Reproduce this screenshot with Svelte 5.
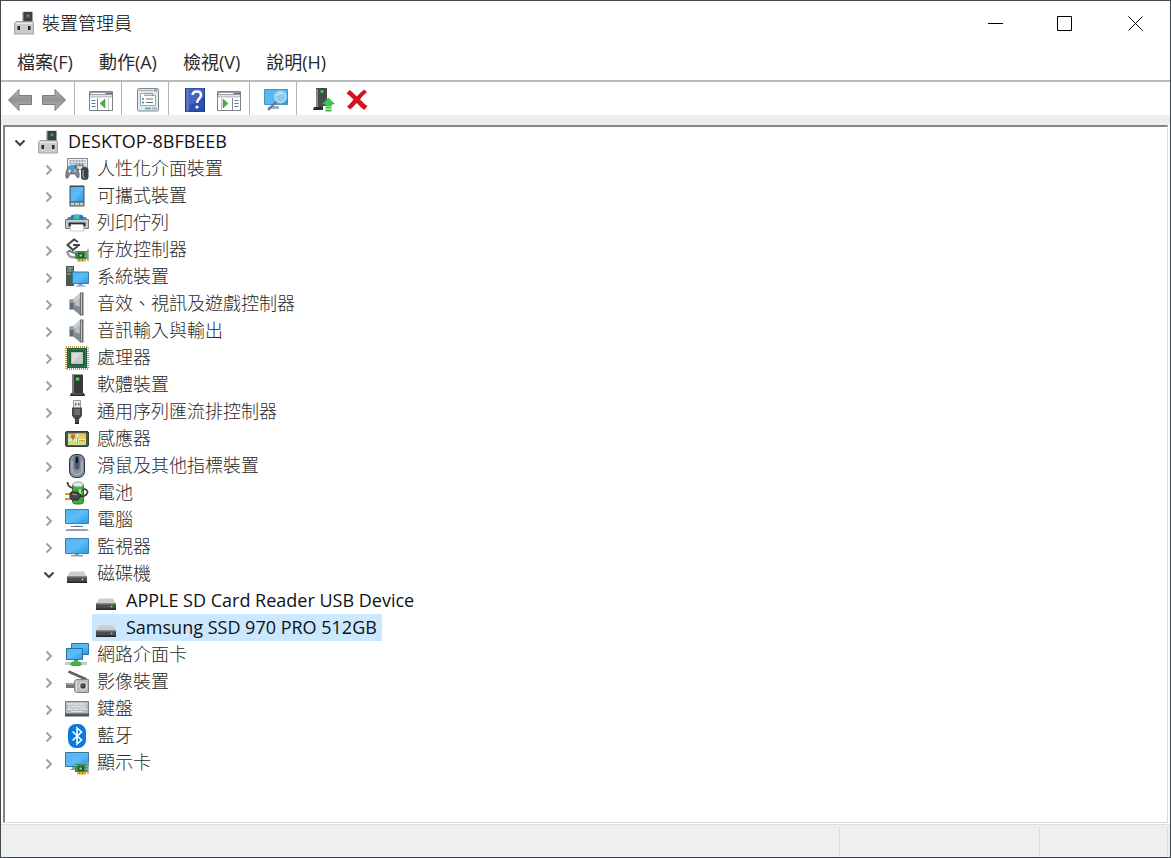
<script>
    const title = '裝置管理員'
    const menus = ['檔案(F)', '動作(A)', '檢視(V)', '說明(H)']
    const tools = [
        [['back', '上一頁'], ['forward', '下一頁']],
        [['tree', '顯示/隱藏主控台樹狀目錄']],
        [['properties', '內容']],
        [['help', '說明'], ['actions', '顯示/隱藏執行窗格']],
        [['scan', '掃描硬體變更']],
        [['update', '更新驅動程式'], ['remove', '解除安裝裝置']]
    ]
    const categories = [
        { icon: 'hid', name: '人性化介面裝置' },
        { icon: 'portable', name: '可攜式裝置' },
        { icon: 'printer', name: '列印佇列' },
        { icon: 'storage', name: '存放控制器' },
        { icon: 'system', name: '系統裝置' },
        { icon: 'speaker', name: '音效、視訊及遊戲控制器' },
        { icon: 'speaker', name: '音訊輸入與輸出' },
        { icon: 'cpu', name: '處理器' },
        { icon: 'software', name: '軟體裝置' },
        { icon: 'usb', name: '通用序列匯流排控制器' },
        { icon: 'sensor', name: '感應器' },
        { icon: 'mouse', name: '滑鼠及其他指標裝置' },
        { icon: 'battery', name: '電池' },
        { icon: 'computer', name: '電腦' },
        { icon: 'monitor', name: '監視器' },
        {
            icon: 'disk',
            name: '磁碟機',
            devices: ['APPLE SD Card Reader USB Device', 'Samsung SSD 970 PRO 512GB']
        },
        { icon: 'network', name: '網路介面卡' },
        { icon: 'camera', name: '影像裝置' },
        { icon: 'keyboard', name: '鍵盤' },
        { icon: 'bluetooth', name: '藍牙' },
        { icon: 'display', name: '顯示卡' }
    ]

    let rootOpen = $state(true)
    let open = $state({ 磁碟機: true })
    let selected = $state('Samsung SSD 970 PRO 512GB')
</script>

{#snippet card()}
    <path d='M10 13h13v8H10z' fill='#3f8a4c' />
    <path d='M23 11v12' stroke='#9aa3a3' stroke-width='1.5' />
    <path d='M13 15h6v5h-6z' fill='#245b35' />
    <path d='M14.5 16.5h2.5v2h-2.5z' fill='#8fd08c' />
    <path d='M10.5 14.5h1.5M20 15h2M20 18h2' stroke='#a4d6a0' />
    <path d='M12 21h9v2.500h-9z' fill='#e8ae22' />
    <path d='M14.500 21v2.500M17.500 21v2.500' stroke='#9c7413' stroke-width='.7' />
{/snippet}

{#snippet icon(name)}
    <svg class='icon' viewBox='0 0 24 24' aria-hidden='true'>
        {#if name === 'manager'}
            <path d='M11.500 .8h9v13h-9z' fill='#3b4140' />
            <path d='M10.500 1.500l1.500-1v14h-1.500z' fill='#727877' />
            <path d='M14 3.500h4v3h-4z' fill='#3f6b46' />
            <path d='M15 4h1.500v1.500H15z' fill='#74b878' />
            <path d='M2.500 12l1.500-1.500h16l1.500 1.500v11h-19z' fill='#cbcbcf' stroke='#96969a' stroke-width='.8' />
            <path d='M3.500 12.500h17' stroke='#eee' />
            <path d='M5.500 15h2.500v4H5.500zM16 15h2.500v4H16z' fill='#292c2c' />
        {:else if name === 'hid'}
            <path d='M2.500 1.500h20v11h-20z' fill='#eceef0' stroke='#858b90' />
            <path d='M4.500 4h16M4.500 6.500h16M4.500 9h16' stroke='#8b9297' stroke-width='1.300' stroke-dasharray='2 1' />
            <path d='M4 9.500c-2 1-4 8-2.800 11.500 1.500 1.500 2.500-1.500 3.800-4h5c1.200 2 2.300 5 3.800 3.500C15 17 13 10.500 11 9.500c-2-1-5-1-7 0z' fill='#80878d' stroke='#4c5359' stroke-width='.7' />
            <circle cx='7' cy='11' r='2.800' fill='#3ca2ea' />
            <path d='M3 14h3M4.500 12.500v3M9 14h2' stroke='#f2f4f5' />
            <path d='M10 11V8h8v3' stroke='#5a6268' fill='none' />
            <rect x='16' y='10' width='7.500' height='13' rx='3.500' fill='#3c4349' />
            <path d='M18 13v6c0 1.500 1 2 2 2' stroke='#b6bdc3' fill='none' />
        {:else if name === 'portable'}
            <rect x='4.500' y='1.500' width='15' height='21' rx='1' fill='#3e4851' />
            <path d='M5.500 3h13v14.500h-13z' fill='url(#glass)' />
            <path d='M5.500 18.500h13v3h-13z' fill='#c8ccce' />
            <path d='M9.500 18.500v3M14.500 18.500v3' stroke='#777e82' />
        {:else if name === 'printer'}
            <path d='M3 6h18l2 4H1z' fill='#777c80' />
            <path d='M6 4.500C8 3 16 3 18 4.500L19 9H5z' fill='#2375bb' />
            <path d='M9 4h6l-1 5H8z' fill='#35c79c' />
            <path d='M.5 8.500h23v9H.5z' fill='#c4c8cb' stroke='#72787c' />
            <path d='M3.500 11.500h17v4h-17z' fill='#292e31' />
            <path d='M6 13.500h12l1 6.500H5z' fill='#fff' stroke='#b8bdc0' stroke-width='.7' />
        {:else if name === 'storage'}
            <path d='M13 4L9 1.500 2.500 7l5.500 5 5-4M8 7h7' stroke='#3f4447' stroke-width='2' fill='none' />
            <path d='M2 13c1.500 6 4 7 8 6' stroke='#989da0' stroke-width='2.500' fill='none' />
            <path d='M3 12.500l8 3' stroke='#73797c' stroke-width='2' />
            {@render card()}
        {:else if name === 'system'}
            <path d='M1 1h8v20H1z' fill='#505858' />
            <path d='M2 3h6M2 6h6M2 9h4' stroke='#9aaead' />
            <path d='M4 2h2v3H4z' fill='#45c651' />
            <path d='M7.500 7h16v11.500h-16z' fill='url(#glass)' stroke='#34779f' />
            <path d='M13.500 19h4v1.500h3v1h-10v-1h3z' fill='#84a5b9' />
        {:else if name === 'speaker'}
            <path d='M4.500 7.500h5v10h-5z' fill='#5f6971' />
            <path d='M5 8h4v3H5z' fill='#8f99a1' />
            <path d='M8.500 7L15.500.5v23l-7-6z' fill='url(#metal)' />
            <path d='M8.500 7L15.500.5v5l-7 5z' fill='#c8cdd1' />
            <path d='M8.500 13l7 2v8.500l-7-6z' fill='#818a92' />
            <path d='M15 .5h3.500v23H15z' fill='#666d73' />
            <path d='M16.500 1.500v21' stroke='#c2c6ca' />
        {:else if name === 'cpu'}
            <rect x='1' y='1' width='22' height='22' fill='none' stroke='#b79b48' stroke-width='2' stroke-dasharray='1 1' />
            <path d='M2 2h20v20H2z' fill='#225f3b' />
            <path d='M3.500 3.500h17v17h-17z' fill='none' stroke='#43815c' stroke-width='.7' />
            <path d='M6.500 6.500h11v11h-11z' fill='#d9dbdb' stroke='#b6c4bb' />
            <path d='M17 7v10H7z' fill='#c5c9c9' />
        {:else if name === 'software'}
            <path d='M7 1.500h11v19H7z' fill='#353a3b' />
            <path d='M7 2h2v18H7z' fill='#777e7f' />
            <path d='M10 4h5v4h-5z' fill='#236e32' />
            <circle cx='12.500' cy='6' r='1.500' fill='#67df63' />
            <path d='M6 20h13l1 3H5z' fill='#252829' />
            <path d='M7 21h11' stroke='#696e70' />
        {:else if name === 'usb'}
            <path d='M8.500.5h7v8h-7z' fill='#e6e6e6' stroke='#999d9f' />
            <path d='M10 3h1.500v2.500H10zM13 3h1.500v2.500H13z' fill='#6e7172' />
            <path d='M7 7.500h10v8l-2 3H9l-2-3z' fill='#434748' />
            <path d='M9 9h6v6H9z' fill='#686d6f' />
            <path d='M10 18h4v6h-4z' fill='#27292a' />
            <path d='M9.500 19.500h5M10 21.500h4' stroke='#72797b' stroke-width='.7' />
        {:else if name === 'sensor'}
            <rect x='.5' y='4.500' width='23' height='15' rx='1.500' fill='#4d554c' stroke='#343c34' />
            <path d='M3 6.500h18v11.500H3z' fill='#c7df8d' />
            <path d='M13 6.500h8v4h-8z' fill='#efc65f' />
            <path d='M3 13h18M12.500 6.500v11.500' stroke='#f2f3ce' stroke-width='1.500' />
            <path d='M12.500 10v7M14 13.500h6' stroke='#e29b35' />
            <path d='M6 7.500h4V11H6z' fill='#e45b43' />
            <path d='M8 11v2.500' stroke='#a83a2d' />
        {:else if name === 'mouse'}
            <rect x='4.500' y='.5' width='15' height='23' rx='6' fill='#8490a0' stroke='#272d34' />
            <path d='M7 7v9c0 6 10 6 10 0V7' fill='none' stroke='#b8c5d3' />
            <rect x='9.500' y='1.500' width='5' height='14' rx='2.500' fill='#4d596a' />
            <path d='M12 3.500v5.500' stroke='#0e151d' stroke-width='2' />
        {:else if name === 'battery'}
            <rect x='7.500' y='2.500' width='11' height='20.500' rx='3' fill='#3eae3b' stroke='#43604a' />
            <ellipse cx='13' cy='3.500' rx='5' ry='2.500' fill='#e2eee5' stroke='#93a498' />
            <path d='M15 8v5' stroke='#a2ee91' stroke-width='2' />
            <path d='M2.500 1c0 4 2 5 5 6M15 15.500c6 0 8-3 7.500-5-1-3-4-3-5-1' fill='none' stroke='#3e4040' stroke-width='1.800' />
            <path d='M0 13h7M0 18h7' stroke='#c59d34' stroke-width='2' />
            <path d='M6 11h6l4 3-3 5H7l-2-2v-4z' fill='#454846' stroke='#292b2a' />
            <path d='M7 13l5 1' stroke='#94a094' />
        {:else if name === 'computer'}
            <path d='M.5 1.500h23v14H.5z' fill='url(#glass)' stroke='#3b83b3' />
            <path d='M6 18.500h12' stroke='#5e7c90' />
            <path d='M10 17h4v1h-4z' fill='#cad4da' />
            <path d='M2 21h20l2 2H0z' fill='#90a0ac' />
        {:else if name === 'monitor'}
            <path d='M.5 3.500h23v15H.5z' fill='url(#glass)' stroke='#3b7fac' />
            <path d='M10 19h4v1h4v1.500H6V20h4z' fill='#879ba9' />
        {:else if name === 'disk'}
            <path d='M5 9.500h14l3 5.500H2z' fill='#cbcecc' />
            <path d='M2 14.500h20v6H2z' fill='#494c4a' />
            <path d='M2.500 15h19' stroke='#858986' />
            <path d='M2 19.500h20v1.500H2z' fill='#252725' />
            <circle cx='17.500' cy='17.500' r='1' fill='#5cf356' />
        {:else if name === 'network'}
            <path d='M6.500.5h17v11h-17z' fill='url(#glass)' stroke='#29729f' />
            <path d='M1.500 5.500h16v11h-16z' fill='url(#glass)' stroke='#29729f' />
            <path d='M9 17h4v2H9z' fill='#58a357' />
            <path d='M0 19h22v3H0z' fill='#c4c9c8' />
            <path d='M7 18.500h8l2 3-2 1.500H7l-2-1.500z' fill='#40b343' />
        {:else if name === 'camera'}
            <path d='M3.500 1.500l18 8' stroke='#616263' stroke-width='2.500' />
            <path d='M1 13h9v5H1z' fill='#717577' />
            <path d='M2 14h7' stroke='#cbd0d1' />
            <path d='M9.500 11l2-1.500h12v13H11.500l-2-1.500z' fill='#babcbb' stroke='#7f8383' />
            <path d='M11.500 11v10' stroke='#e3e5e4' />
            <circle cx='18' cy='16' r='3.700' fill='#8d9491' stroke='#e4e5e2' />
            <circle cx='18' cy='16' r='2.400' fill='#243b34' />
            <circle cx='17.500' cy='15.500' r='.8' fill='#83b59b' />
        {:else if name === 'keyboard'}
            <path d='M.5 4.500h23v13H.5z' fill='#b5babf' stroke='#767f86' />
            <path d='M2.500 7h19M3.500 9.500h17M2.500 12h19' stroke='#f5f5f5' stroke-width='1.500' stroke-dasharray='2 1' />
            <path d='M6 14.500h12' stroke='#e2e5e8' />
            <path d='M0 16.500h24v3H0z' fill='#4a535a' />
        {:else if name === 'bluetooth'}
            <rect x='3' width='18' height='24' rx='8' fill='#087be1' />
            <path d='M7.500 7.500l9 8.500-4.500 4V4l4.500 4-9 8.500' fill='none' stroke='#fff' stroke-width='1.600' />
        {:else if name === 'display'}
            <path d='M.5 1.500h23v14H.5z' fill='url(#glass)' stroke='#35789d' />
            <path d='M7 16h4v3H5v-1h2z' fill='#8ca1ac' />
            {@render card()}
        {:else if name === 'back' || name === 'forward'}
            <path
                transform={name === 'forward' ? 'matrix(-1 0 0 1 24 0)' : undefined}
                d='M.5 12L11 1.500v6h12.500v9H11v6z'
                fill='url(#arrow)'
                stroke='#7b7b7b'
            />
        {:else if name === 'tree' || name === 'actions'}
            <path d='M.5 3.500h23v19H.5z' fill='#fff' stroke='#7b838a' />
            <path d='M1 4h22v3H1z' fill='#9aa1a8' />
            <path d='M2 5.500h14' stroke='#fff' />
            <path d='M18 5.500h1.500M21 5.500h1.500' stroke='#343c43' />
            <path d='M1 8.500h22' stroke='#c3c7ca' stroke-width='2' />
            {#if name === 'tree'}
                <path d='M8.500 10v12' stroke='#7f8991' />
                <path d='M2.500 12.500h4M2.500 15.500h4M2.500 18.500h4' stroke='#527ba6' />
                <path d='M16 11v9l-5-4.500z' fill='#50aa43' stroke='#388735' stroke-width='.5' />
                <path d='M19.500 10v12' stroke='#c3c7ca' />
            {:else}
                <path d='M15.500 10v12' stroke='#7f8991' />
                <path d='M4.500 10v12' stroke='#c3c7ca' />
                <path d='M17.500 12.500h4M17.500 15.500h4M17.500 18.500h4' stroke='#527ba6' />
                <path d='M6 11v9l5-4.500z' fill='#50aa43' stroke='#388735' stroke-width='.5' />
            {/if}
        {:else if name === 'properties'}
            <rect x='1.500' y='.5' width='21' height='22.500' rx='1.500' fill='#e5e7e9' stroke='#7d868e' />
            <path d='M3 2.500h14' stroke='#a4aaae' />
            <path d='M18 1.500l3 2M21 1.500l-3 2' stroke='#5c6872' stroke-width='.8' />
            <path d='M4.500 5.500h4v2h11v10h-15z' fill='#fff' stroke='#a0a8af' />
            <path d='M8.500 5.500h8v2' fill='none' stroke='#8d979f' />
            <path d='M6 11h2M6 14.500h2' stroke='#318bbf' stroke-width='1.500' />
            <path d='M10 11h7M10 14.500h7' stroke='#6d7479' />
            <path d='M9 20.500h6' stroke='#4fb9d6' stroke-width='2' />
            <path d='M16 20.500h5' stroke='#adb2b5' stroke-width='2' />
        {:else if name === 'help'}
            <path d='M2.500 0h19v24h-19z' fill='#2c50ad' stroke='#1b3984' />
            <path d='M3 .5h3v23H3z' fill='#5876c4' />
            <path d='M6 .5h15v8L6 18z' fill='#4165c0' />
            <path d='M9.500 7c.5-5 8.500-4.500 8.500 0 0 4-4 4-4 8' fill='none' stroke='#fff' stroke-width='2.500' />
            <circle cx='14' cy='19' r='1.600' fill='#fff' />
        {:else if name === 'scan'}
            <path d='M.5 1.500h23v15H.5z' fill='url(#glass)' stroke='#4b91b9' />
            <path d='M8 18h7v3H4v-2z' fill='#9eafb9' />
            <path d='M13 13l-9 9' stroke='#5d7890' stroke-width='2' />
            <circle cx='16.500' cy='9' r='5.500' fill='#8ccaf0' stroke='#c6dbe5' stroke-width='1.500' />
            <path d='M13.500 8c1-3 3-3 5-2' fill='none' stroke='#e9faff' />
        {:else if name === 'update'}
            <path d='M5 0h11v20H5z' fill='#464b4c' />
            <path d='M5 1h2v19H5z' fill='#858b8c' />
            <path d='M9 2h4v3H9z' fill='#2c8540' />
            <circle cx='11' cy='3.500' r='1' fill='#79ec72' />
            <path d='M3 19h14v3H2z' fill='#292c2d' />
            <path d='M17.500 10l6 6h-3v2h-6v-2h-3z' fill='#37cb49' stroke='#2eaa40' stroke-width='.6' />
            <path d='M12 18h12v6H12z' fill='#fff' />
            <path d='M14.500 19.500h6M14.500 22.500h6' stroke='#37bc49' stroke-width='2' />
        {:else if name === 'remove'}
            <path d='M4.500 2C7 3.500 9.500 6 11.800 8.500 14 6 16.500 3.500 19.500 1.500l2.500 3c-2.500 1.500-5 4-7 7 2.500 2.500 5 5 7.500 6.500L19.500 22c-3-2-5.500-4.500-7.700-7-2.300 2.500-4.300 4.500-6.500 6.500l-3.300-3c2.500-2 4.500-4.500 6.500-7C6 9 4 7 1.500 5.500z' fill='#d71022' />
        {/if}
    </svg>
{/snippet}

{#snippet chevron(isOpen)}
    <svg class='chevron' class:open={isOpen} viewBox='0 0 12 12' aria-hidden='true'>
        <path d={isOpen ? 'M1.500 3.500L6 8 10.500 3.500' : 'M3.500 1.500L8 6 3.500 10.500'} />
    </svg>
{/snippet}

{#snippet label(iconName, name)}
    <button
        class='label'
        class:selected={selected === name}
        class:latin={/^[A-Z]/i.test(name)}
        onclick={() => selected = name}
    >
        {@render icon(iconName)}
        <span>{name}</span>
    </button>
{/snippet}

<svg class='defs' aria-hidden='true'>
    <defs>
        <linearGradient id='glass' x1='0' y1='0' x2='1' y2='1'>
            <stop offset='0' stop-color='#51b2f2' />
            <stop offset='.5' stop-color='#5cbcf8' />
            <stop offset='1' stop-color='#2a97e3' />
        </linearGradient>
        <linearGradient id='metal'>
            <stop offset='0' stop-color='#8e959b' />
            <stop offset='.5' stop-color='#c4c8cb' />
            <stop offset='1' stop-color='#a0a6aa' />
        </linearGradient>
        <linearGradient id='arrow' x1='0' y1='0' x2='0' y2='1'>
            <stop offset='0' stop-color='#bcbcbc' />
            <stop offset='.45' stop-color='#929292' />
            <stop offset='1' stop-color='#b4b4b4' />
        </linearGradient>
    </defs>
</svg>

<div class='window'>
    <header>
        {@render icon('manager')}
        <h1>{title}</h1>
        <div class='controls'>
            <button aria-label='最小化'>
                <svg viewBox='0 0 16 16'><path d='M1 8.500h15' /></svg>
            </button>
            <button aria-label='最大化'>
                <svg viewBox='0 0 16 16'><path d='M.5 1.500h14v14H.5z' /></svg>
            </button>
            <button aria-label='關閉'>
                <svg viewBox='0 0 16 16'><path d='M1.500 1.500l14 14M15.500 1.500l-14 14' /></svg>
            </button>
        </div>
    </header>

    <nav>
        {#each menus as menu (menu)}
            <button>{menu}</button>
        {/each}
    </nav>

    <div class='toolbar' role='toolbar'>
        {#each tools as group, i (i)}
            <div class='group'>
                {#each group as [name, text] (name)}
                    <button aria-label={text}>{@render icon(name)}</button>
                {/each}
            </div>
        {/each}
    </div>

    <main>
        <ul>
            <li>
                <div class='row'>
                    <button class='toggle' aria-label='DESKTOP-8BFBEEB' aria-expanded={rootOpen} onclick={() => rootOpen = !rootOpen}>
                        {@render chevron(rootOpen)}
                    </button>
                    {@render label('manager', 'DESKTOP-8BFBEEB')}
                </div>
                {#if rootOpen}
                    <ul>
                        {#each categories as cat (cat.name)}
                            <li>
                                <div class='row'>
                                    <button class='toggle' aria-label={cat.name} aria-expanded={!!open[cat.name]} onclick={() => open[cat.name] = !open[cat.name]}>
                                        {@render chevron(open[cat.name])}
                                    </button>
                                    {@render label(cat.icon, cat.name)}
                                </div>
                                {#if open[cat.name] && cat.devices}
                                    <ul>
                                        {#each cat.devices as device (device)}
                                            <li class='row'>{@render label(cat.icon, device)}</li>
                                        {/each}
                                    </ul>
                                {/if}
                            </li>
                        {/each}
                    </ul>
                {/if}
            </li>
        </ul>
    </main>

    <footer>
        <div></div>
        <div></div>
        <div></div>
    </footer>
</div>

<style>
    :global(body) {
        margin: 0;
    }
    .defs {
        display: block;
        width: 0;
        height: 0;
    }
    .window {
        box-sizing: border-box;
        min-height: 100vh;
        display: flex;
        flex-direction: column;
        border: 1px solid #42474d;
        background: #fff;
        color: #2a2a2a;
        font: 18px/27px 'Open Sans', 'Noto Sans CJK TC', sans-serif;
    }
    button {
        padding: 0;
        border: 0;
        background: none;
        color: inherit;
        font: inherit;
    }
    ul {
        list-style: none;
        margin: 0;
        padding: 0;
    }
    .icon {
        flex: none;
        display: block;
        width: 24px;
        height: 24px;
    }

    header {
        display: flex;
        align-items: center;
        height: 44px;
        padding-left: 11px;
    }
    h1 {
        flex: 1;
        margin: 0 0 0 6px;
        padding-bottom: 2px;
        font: 18px/27px 'Noto Sans CJK TC', sans-serif;
        font-weight: 300;
        color: #000;
    }
    .controls {
        display: flex;
    }
    .controls button {
        display: flex;
        align-items: center;
        justify-content: center;
        width: 70px;
        height: 44px;
    }
    .controls button:hover, nav button:hover, .toolbar button:hover {
        background: #e5f3ff;
    }
    .controls svg {
        width: 16px;
        height: 16px;
        fill: none;
        stroke: #000;
    }

    nav {
        display: flex;
        gap: 2px;
        height: 35px;
        padding-left: 4px;
        border-bottom: 2px solid #bbb;
    }
    nav button {
        padding: 0 12px;
    }

    .toolbar {
        display: flex;
        height: 33px;
        padding-left: 2px;
        border-bottom: 10px solid #eee;
    }
    .group {
        display: flex;
    }
    .group + .group {
        margin-left: 3px;
        padding-left: 9px;
        border-left: 1px solid #b4b4b4;
    }
    .toolbar button {
        display: flex;
        align-items: center;
        justify-content: center;
        width: 34px;
        padding-top: 2px;
    }

    main {
        flex: 1;
        margin: 0 2px;
        padding: 1px 0 24px;
        border: 2px solid #858585;
        border-right: 1px solid #ddd;
        border-bottom: 1px solid #ddd;
    }
    ul ul .row {
        padding-left: 29px;
    }
    ul ul ul .row {
        padding-left: 87px;
    }
    .row {
        display: flex;
        height: 27px;
    }
    .toggle {
        display: flex;
        align-items: center;
        justify-content: center;
        width: 29px;
        padding-top: 3px;
    }
    .chevron {
        width: 12px;
        height: 12px;
        fill: none;
        stroke: #a0a0a0;
        stroke-width: 2;
    }
    .chevron.open {
        stroke: #404040;
    }
    .label {
        display: flex;
        gap: 8px;
        padding: 0 5px 0 2px;
        line-height: 26px;
        font-weight: 300;
        white-space: nowrap;
    }
    .label .icon {
        margin-top: 2px;
    }
    .label.selected {
        background: #cce8ff;
    }
    .latin {
        color: #111;
        font-weight: 400;
    }

    footer {
        display: flex;
        height: 32px;
        margin-top: 1px;
        padding-right: 2px;
        border-top: 1px solid #ddd;
        background: #efefef;
    }
    footer div {
        box-sizing: border-box;
        width: 200px;
        margin-top: 2px;
        border-right: 1px solid #ddd;
    }
    footer div:first-child {
        flex: 1;
    }
    footer div:last-child {
        width: 128px;
    }
</style>
